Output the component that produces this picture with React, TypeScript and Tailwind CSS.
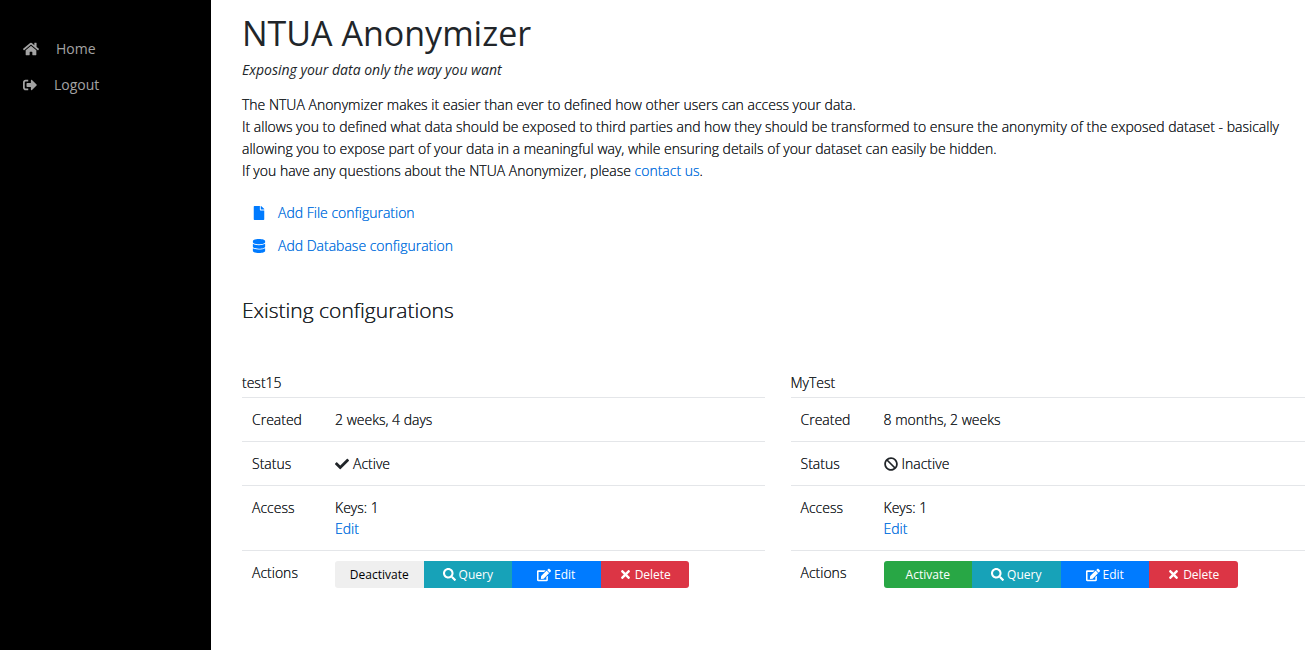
import { FaHome, FaSignOutAlt, FaFile, FaDatabase, FaCheck, FaBan, FaSearch, FaEdit, FaTimes } from "react-icons/fa";

type Config = { name: string; created: string; active: boolean; keys: number };

const configs: Config[] = [
  { name: "test15", created: "2 weeks, 4 days", active: true, keys: 1 },
  { name: "MyTest", created: "8 months, 2 weeks", active: false, keys: 1 },
];

const link = "text-[#0f76e0]";
const row = "border-t border-[#e4e6e9]";
const th = "w-[83px] px-[10px] py-[11px] text-left align-top font-light";
const td = "px-[10px] py-[11px] align-top";
const btn = "flex h-[27px] flex-1 items-center justify-center gap-[3px] text-[12px] font-normal [text-shadow:none]";

function ConfigCard({ config }: { config: Config }) {
  return (
    <section className="min-w-0">
      <h3 className="mb-[4px]">{config.name}</h3>
      <table className="w-full border-collapse">
        <tbody>
          <tr className={row}>
            <th scope="row" className={th}>Created</th>
            <td className={td}>{config.created}</td>
          </tr>
          <tr className={row}>
            <th scope="row" className={th}>Status</th>
            <td className={td}>
              <span className="flex items-center gap-1">
                {config.active ? <FaCheck /> : <FaBan />}
                {config.active ? "Active" : "Inactive"}
              </span>
            </td>
          </tr>
          <tr className={row}>
            <th scope="row" className={th}>Access</th>
            <td className={td}>
              Keys: {config.keys}
              <br />
              <a href="#edit" className={link}>Edit</a>
            </td>
          </tr>
          <tr className={row}>
            <th scope="row" className={th}>Actions</th>
            <td className="px-[10px] py-[10px] align-top">
              <div className="flex w-[354px] overflow-hidden rounded-[3px] text-white">
                {config.active ? (
                  <button className={`${btn} bg-[#efefef] text-black`}>Deactivate</button>
                ) : (
                  <button className={`${btn} bg-[#28a745]`}>Activate</button>
                )}
                <button className={`${btn} bg-[#17a2b8]`}><FaSearch size={13} />Query</button>
                <button className={`${btn} bg-[#007bff]`}><FaEdit size={14} />Edit</button>
                <button className={`${btn} bg-[#dc3545]`}><FaTimes size={13} />Delete</button>
              </div>
            </td>
          </tr>
        </tbody>
      </table>
    </section>
  );
}

export default function App() {
  return (
    <div className="flex min-h-screen bg-white font-['Open_Sans','Noto_Sans',sans-serif] text-[14px] leading-[21px] text-[#212529]">
      <nav className="flex w-[211px] shrink-0 flex-col gap-[15px] bg-black px-[23px] pt-[38px] text-[#a3a3a3]">
        <a href="#home" className="flex items-center gap-[17px]"><FaHome size={16} />Home</a>
        <a href="#logout" className="flex items-center gap-[17px]"><FaSignOutAlt />Logout</a>
      </nav>
      <main className="min-w-0 flex-1 overflow-hidden pt-[12px] pl-[31px] font-light [text-shadow:0_0_0_currentColor]">
        <h1 className="text-[34px] leading-[43px] font-normal [text-shadow:none]">NTUA Anonymizer</h1>
        <p className="mt-1 font-normal italic [text-shadow:none]">Exposing your data only the way you want</p>
        <p className="mt-[14px] pr-4 leading-[22px]">
          The NTUA Anonymizer makes it easier than ever to defined how other users can access your data.
          <br />
          It allows you to defined what data should be exposed to third parties and how they should be transformed to ensure the anonymity of the exposed dataset - basically allowing you to expose part of your data in a meaningful way, while ensuring details of your dataset can easily be hidden.
          <br />
          If you have any questions about the NTUA Anonymizer, please <a href="#contact" className={link}>contact us</a>.
        </p>
        <div className={`mt-5 flex flex-col items-start gap-3 pl-[10px] ${link}`}>
          <a href="#file" className="flex items-center gap-3"><FaFile className="text-[#007bff]" />Add File configuration</a>
          <a href="#database" className="flex items-center gap-3"><FaDatabase className="text-[#007bff]" />Add Database configuration</a>
        </div>
        <h2 className="mt-[41px] text-[21px] leading-[26px]">Existing configurations</h2>
        <div className="-mr-2 mt-[49px] grid grid-cols-2 gap-[26px]">
          {configs.map((c) => <ConfigCard key={c.name} config={c} />)}
        </div>
      </main>
    </div>
  );
}
